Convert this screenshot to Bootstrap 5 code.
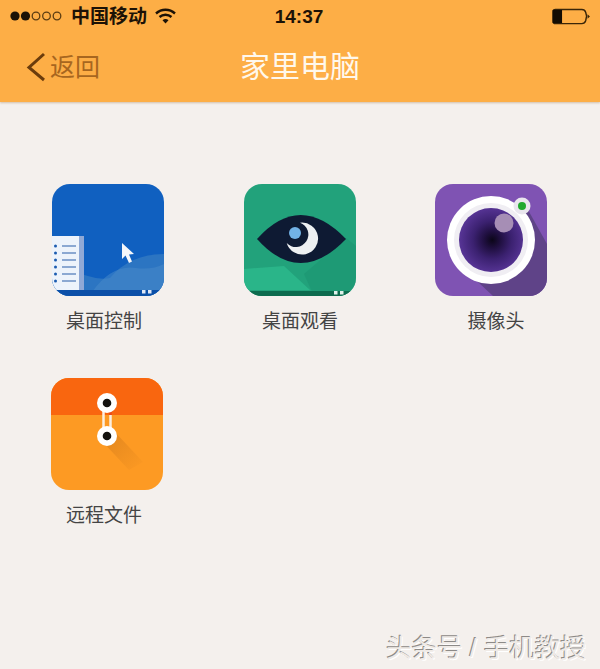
<!DOCTYPE html>
<html lang="zh-CN">
<head>
    <meta charset="UTF-8">
    <meta name="viewport" content="width=device-width, initial-scale=1.0">
    <title>家里电脑</title>
    <link rel="stylesheet" href="https://cdn.jsdelivr.net/npm/bootstrap@5.3.1/dist/css/bootstrap.min.css">
    <script src="https://cdn.jsdelivr.net/npm/bootstrap@5.3.1/dist/js/bootstrap.bundle.min.js"></script>
    <style>
        html, body {
            height: 100%;
        }
        body {
            background: #f4f0ed;
            font-family: "Liberation Sans", "Noto Sans CJK SC", sans-serif;
            overflow: hidden;
        }
        .screen {
            width: 600px;
            height: 669px;
        }
        .app-header {
            height: 102px;
            background: #fdae46;
            box-shadow: 0 1px 2px rgba(150, 100, 40, .35);
        }
        .status-bar {
            height: 32px;
            padding: 0 8px 0 10px;
            color: #1c1206;
        }
        .status-side {
            width: 240px;
        }
        .carrier {
            font-size: 19px;
            font-weight: 700;
            line-height: 1;
        }
        .clock {
            font-size: 19px;
            font-weight: 700;
            line-height: 1;
            margin-left: -4px;
        }
        .nav-row {
            height: 70px;
            padding-left: 26px;
        }
        .nav-side {
            width: 144px;
        }
        .back-link {
            color: #a7661f;
            font-size: 25px;
            line-height: 1;
            text-decoration: none;
        }
        .page-title {
            color: #fff8ec;
            font-size: 30px;
            font-weight: 400;
            line-height: 1;
            margin: 0;
            width: 260px;
        }
        .tile-grid {
            padding: 82px 12px 0;
        }
        .tile-row {
            height: 194px;
        }
        .app-icon {
            width: 112px;
            height: 112px;
            display: block;
        }
        .icon-nudge {
            margin-left: -2px;
        }
        .tile-label {
            color: #444;
            font-size: 19px;
            line-height: 1;
            margin-top: 16px;
        }
        .label-nudge-left {
            margin-left: -8px;
        }
        .label-nudge-right {
            margin-left: 8px;
        }
        .watermark {
            bottom: 4px;
            right: 14px;
            color: #efeae6;
            font-size: 25.5px;
            line-height: 1.3;
            text-shadow: -1px -1px 0 #8d8a87, 1px 1px 0 #fff;
        }
    </style>
</head>
<body>

<div class="screen position-relative">
    <header class="app-header">
        <div class="status-bar d-flex align-items-center">
            <div class="status-side d-flex align-items-center">
                <svg width="53" height="12" viewBox="0 0 53 12">
                    <circle cx="5" cy="6" r="4.6" fill="#1c1206"/>
                    <circle cx="15.5" cy="6" r="4.6" fill="#1c1206"/>
                    <circle cx="26" cy="6" r="3.8" fill="none" stroke="#5c3d12" stroke-width="1.3"/>
                    <circle cx="36.5" cy="6" r="3.8" fill="none" stroke="#5c3d12" stroke-width="1.3"/>
                    <circle cx="47" cy="6" r="3.8" fill="none" stroke="#5c3d12" stroke-width="1.3"/>
                </svg>
                <span class="carrier ms-2">中国移动</span>
                <svg class="ms-2" width="21" height="16" viewBox="0 0 21 16">
                    <path d="M1 5.5C6.5.5 14.5.5 20 5.5" fill="none" stroke="#1c1206" stroke-width="2.4"/>
                    <path d="M4.500 9C8 6 13 6 16.500 9" fill="none" stroke="#1c1206" stroke-width="2.400"/>
                    <path d="M7.500 12.200C9.500 10.600 11.500 10.600 13.500 12.200L10.500 15.500Z" fill="#1c1206"/>
                </svg>
            </div>
            <div class="clock flex-grow-1 text-center">14:37</div>
            <div class="status-side d-flex justify-content-end">
                <svg width="41" height="17" viewBox="0 0 42 18">
                    <path d="M4 1.500H32Q35 1.500 36 4.500L37 8.500L36 13.500Q35 16.500 32 16.500H4Q1.500 16.500 1.500 14V4Q1.500 1.500 4 1.500Z" fill="none" stroke="#3a2608" stroke-width="1.500"/>
                    <rect x="1" y="2" width="10" height="14" fill="#120c03"/>
                    <path d="M38 6.500L40.500 9L38 11.500Z" fill="#3a2608"/>
                </svg>
            </div>
        </div>
        <div class="nav-row d-flex align-items-center">
            <div class="nav-side d-flex">
                <a class="back-link d-inline-flex align-items-center" href="#">
                    <svg width="20" height="30" viewBox="0 0 20 30">
                        <path d="M18 2L3 15.500L18 28" fill="none" stroke="#6b3c0c" stroke-width="3"/>
                    </svg>
                    <span class="ms-1">返回</span>
                </a>
            </div>
            <h1 class="page-title text-center">家里电脑</h1>
        </div>
    </header>

    <main class="tile-grid">
        <div class="row g-0 tile-row">
            <div class="col-4 d-flex flex-column align-items-center">
                <svg class="app-icon" viewBox="0 0 112 112">
                    <defs>
                        <clipPath id="clipDesk"><rect width="112" height="112" rx="18"/></clipPath>
                    </defs>
                    <g clip-path="url(#clipDesk)">
                        <rect width="112" height="112" fill="#1060c0"/>
                        <path d="M0 92Q20 86 36 92Q48 96 58 94Q78 70 112 70V112H0Z" fill="#2c75c2"/>
                        <path d="M40 108Q60 80 84 84Q100 86 112 80V112H40Z" fill="#4a8cc9" opacity=".5"/>
                        <rect y="106" width="112" height="6" fill="#0b4fa8"/>
                        <rect x="0" y="52" width="28" height="54" fill="#edf3fb"/>
                        <rect x="27" y="52" width="5" height="54" fill="#90a9d6"/>
                        <g fill="#8ba8d2">
                            <rect x="10" y="61" width="14" height="2"/>
                            <rect x="10" y="68" width="14" height="2"/>
                            <rect x="10" y="75" width="14" height="2"/>
                            <rect x="10" y="82" width="14" height="2"/>
                            <rect x="10" y="89" width="14" height="2"/>
                            <rect x="10" y="96" width="14" height="2"/>
                        </g>
                        <g fill="#1c5cb0">
                            <circle cx="3.500" cy="62" r="1.500"/>
                            <circle cx="3.500" cy="69" r="1.500"/>
                            <circle cx="3.500" cy="76" r="1.500"/>
                            <circle cx="3.500" cy="83" r="1.500"/>
                            <circle cx="3.500" cy="90" r="1.500"/>
                            <circle cx="3.500" cy="97" r="1.500"/>
                        </g>
                        <path d="M70 59L70 75L73.500 71.500L77 79L80 77.500L77 70.500L82 70Z" fill="#f4f6fa"/>
                        <rect x="90" y="106" width="3.500" height="3.500" fill="#dfe8f5"/>
                        <rect x="96" y="106" width="3.500" height="3.500" fill="#dfe8f5"/>
                    </g>
                </svg>
                <div class="tile-label label-nudge-left">桌面控制</div>
            </div>
            <div class="col-4 d-flex flex-column align-items-center">
                <svg class="app-icon" viewBox="0 0 112 112">
                    <defs>
                        <clipPath id="clipEye"><rect width="112" height="112" rx="18"/></clipPath>
                    </defs>
                    <g clip-path="url(#clipEye)">
                        <rect width="112" height="112" fill="#22a27b"/>
                        <path d="M0 85L40 82L66 106H0Z" fill="#2ab589"/>
                        <path d="M60 90L102 54L112 62V112H70Z" fill="#1d9571" opacity=".6"/>
                        <rect y="107" width="112" height="5" fill="#0d6b4e"/>
                        <rect x="90" y="107" width="3.500" height="3.500" fill="#dff1ea"/>
                        <rect x="96" y="107" width="3.500" height="3.500" fill="#dff1ea"/>
                        <path d="M13 55Q56 7 102 55Q56 103 13 55Z" fill="#0e1a33"/>
                        <path d="M56 38.700A16 16 0 1 1 42.700 59A12.500 12.500 0 1 0 56 38.700Z" fill="#edf0f2"/>
                        <circle cx="51" cy="49" r="6" fill="#72b2e6"/>
                    </g>
                </svg>
                <div class="tile-label">桌面观看</div>
            </div>
            <div class="col-4 d-flex flex-column align-items-center">
                <svg class="app-icon icon-nudge" viewBox="0 0 112 112">
                    <defs>
                        <clipPath id="clipCam"><rect width="112" height="112" rx="18"/></clipPath>
                        <radialGradient id="lensGlow" cx=".52" cy=".5" r=".5">
                            <stop offset="0" stop-color="#0b0618"/>
                            <stop offset=".25" stop-color="#1f0f3f"/>
                            <stop offset=".6" stop-color="#3b2170"/>
                            <stop offset="1" stop-color="#553393"/>
                        </radialGradient>
                    </defs>
                    <g clip-path="url(#clipCam)">
                        <rect width="112" height="112" fill="#7f53b3"/>
                        <path d="M92 24L112 60V112H58L28 84Z" fill="#5f4388"/>
                        <circle cx="56" cy="56" r="44" fill="#fff"/>
                        <circle cx="56" cy="56" r="37" fill="#f0eef3"/>
                        <circle cx="56" cy="56" r="32" fill="url(#lensGlow)"/>
                        <circle cx="69" cy="39" r="9.500" fill="#a68eb5"/>
                        <circle cx="87" cy="22" r="8.500" fill="#e9e6ee"/>
                        <circle cx="87" cy="22" r="4" fill="#21a92f"/>
                    </g>
                </svg>
                <div class="tile-label label-nudge-right">摄像头</div>
            </div>
        </div>
        <div class="row g-0 tile-row">
            <div class="col-4 d-flex flex-column align-items-center">
                <svg class="app-icon icon-nudge" viewBox="0 0 112 112">
                    <defs>
                        <clipPath id="clipFile"><rect width="112" height="112" rx="18"/></clipPath>
                        <linearGradient id="flapShadow" x1="0" y1="0" x2="1" y2="1">
                            <stop offset="0" stop-color="#c9741a" stop-opacity=".55"/>
                            <stop offset="1" stop-color="#c9741a" stop-opacity="0"/>
                        </linearGradient>
                    </defs>
                    <g clip-path="url(#clipFile)">
                        <rect width="112" height="112" fill="#fd9a23"/>
                        <rect width="112" height="37" fill="#f9660f"/>
                        <path d="M50 62L62 52L92 84L78 92Z" fill="url(#flapShadow)"/>
                        <path d="M52.500 28V50" fill="none" stroke="#fbeee0" stroke-width="2.500"/>
                        <path d="M59.500 30V37" fill="none" stroke="#e8491a" stroke-width="2.500"/>
                        <path d="M59.500 37V50" fill="none" stroke="#fbeee0" stroke-width="2.500"/>
                        <circle cx="56" cy="25" r="10" fill="#fff"/>
                        <circle cx="56" cy="25" r="4.300" fill="#14120f"/>
                        <circle cx="56" cy="58" r="10" fill="#fff"/>
                        <circle cx="56" cy="58" r="4.300" fill="#14120f"/>
                    </g>
                </svg>
                <div class="tile-label label-nudge-left">远程文件</div>
            </div>
        </div>
    </main>

    <div class="watermark position-absolute">头条号 / 手机教授</div>
</div>

</body>
</html>
